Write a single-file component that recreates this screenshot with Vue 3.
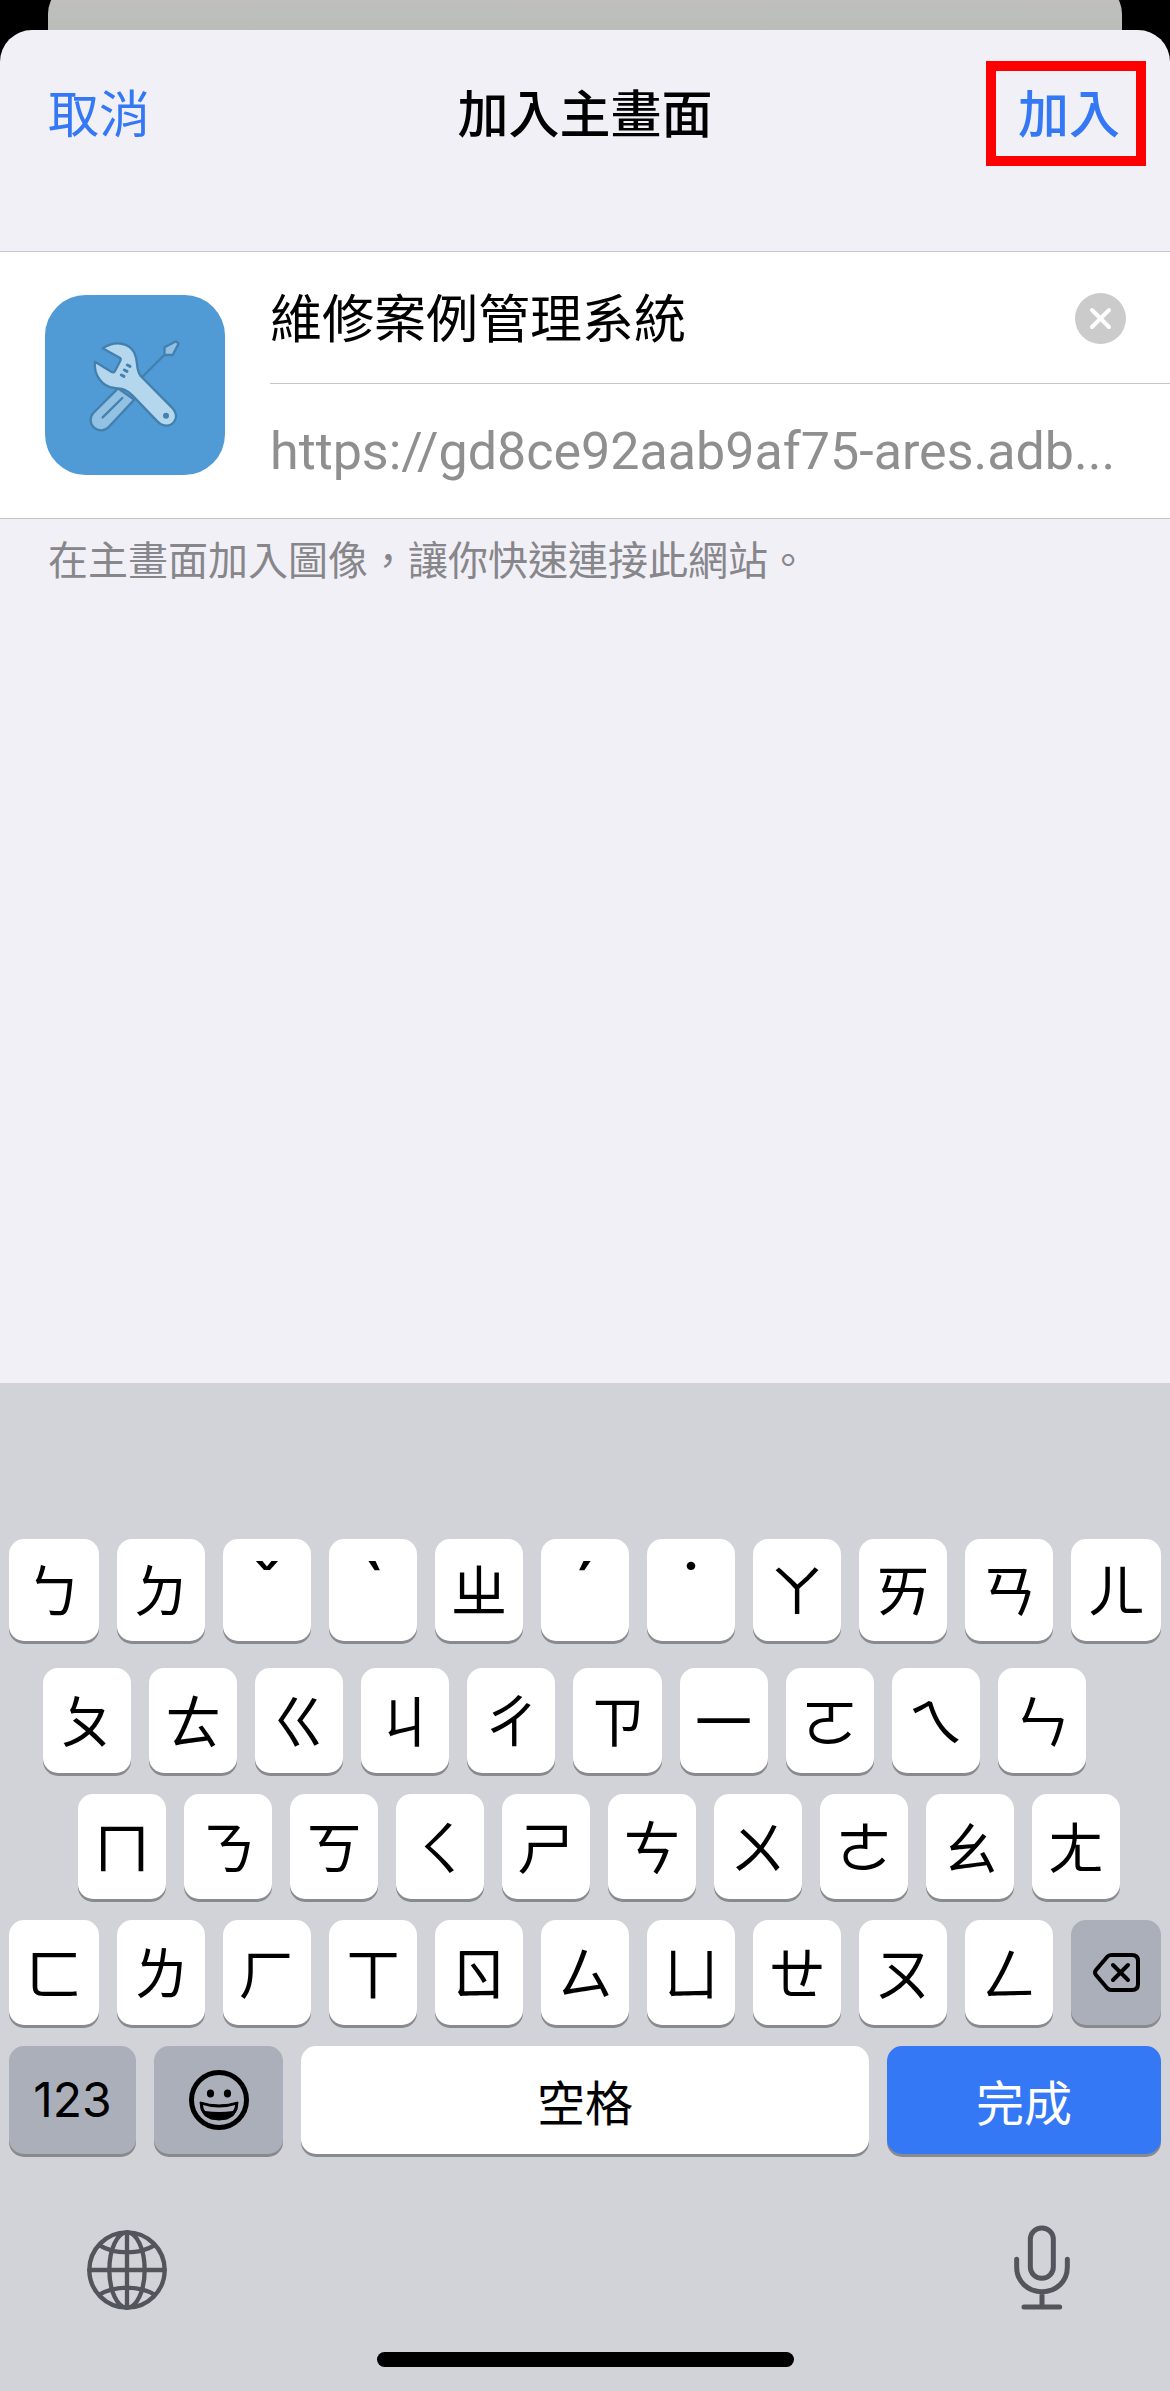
<script setup>
import { ref } from 'vue'

const name = ref('維修案例管理系統')
const url = 'https://gd8ce92aab9af75-ares.adb...'

const tones = ['ˇ', 'ˋ', 'ˊ', '˙']

const rows = [
  { id: 'first', keys: ['ㄅ', 'ㄉ', 'ˇ', 'ˋ', 'ㄓ', 'ˊ', '˙', 'ㄚ', 'ㄞ', 'ㄢ', 'ㄦ'] },
  { id: 'second', keys: ['ㄆ', 'ㄊ', 'ㄍ', 'ㄐ', 'ㄔ', 'ㄗ', '一', 'ㄛ', 'ㄟ', 'ㄣ'] },
  { id: 'third', keys: ['ㄇ', 'ㄋ', 'ㄎ', 'ㄑ', 'ㄕ', 'ㄘ', 'ㄨ', 'ㄜ', 'ㄠ', 'ㄤ'] },
  { id: 'fourth', keys: ['ㄈ', 'ㄌ', 'ㄏ', 'ㄒ', 'ㄖ', 'ㄙ', 'ㄩ', 'ㄝ', 'ㄡ', 'ㄥ'] },
]
</script>

<template>
  <div class="screen">
    <div class="behind"></div>

    <main class="sheet">
      <header class="bar">
        <div class="side">
          <button type="button" class="action">取消</button>
        </div>
        <h1 class="title">加入主畫面</h1>
        <div class="side end">
          <button type="button" class="action add">加入</button>
        </div>
      </header>

      <section class="card">
        <svg class="app-icon" viewBox="-75 -75 540 540" aria-hidden="true">
          <rect x="-75" y="-75" width="540" height="540" rx="122" fill="#509bd5" />
          <g stroke="#4380ae" stroke-width="7" stroke-linejoin="round" stroke-linecap="round">
            <path d="M218 170 284 104" fill="none" />
            <path d="M284 82 318 64 326 71 308 105H283Z" fill="#93c1e3" />
            <path d="M144 205 70 279A31 31 0 0 0 116 321L193 239Z" fill="#93c1e3" />
            <path d="M157 234 98 292" fill="none" />
            <path d="M98 85C137 60 178 69 193 98C207 127 195 145 212 168L309 266C330 292 310 318 287 317C276 316 268 311 262 304L187 226C165 204 154 207 133 204C96 200 70 164 75 125L125 156Q131 159 135 153L151 122Q154 116 149 113Z" fill="#b5d7ee" />
            <path d="M172 135 180 139M163 150 171 154M154 165 162 169" stroke-width="9" />
          </g>
          <circle cx="288" cy="287" r="9" fill="#4380ae" />
        </svg>

        <div class="fields">
          <div class="field named">
            <input v-model="name" class="name" type="text" aria-label="名稱" />
            <button type="button" class="clear" aria-label="清除" @click="name = ''">
              <svg viewBox="0 0 51 51" aria-hidden="true">
                <circle cx="25.500" cy="25.500" r="25.500" fill="#cbcbcb" />
                <path d="M17 17 34 34M34 17 17 34" stroke="#fff" stroke-width="4" stroke-linecap="round" />
              </svg>
            </button>
          </div>
          <div class="field">
            <span class="url">{{ url }}</span>
          </div>
        </div>
      </section>

      <p class="note">在主畫面加入圖像，讓你快速連接此網站。</p>
    </main>

    <section class="keyboard">
      <div class="rows">
        <div v-for="row in rows" :key="row.id" class="row" :class="row.id">
          <button
            v-for="k in row.keys"
            :key="k"
            type="button"
            class="key"
            :class="{ tone: tones.includes(k) }"
          >{{ k }}</button>
          <button v-if="row.id === 'fourth'" type="button" class="key gray" aria-label="刪除">
            <svg class="backspace" viewBox="0 0 47 39" aria-hidden="true">
              <path d="M18 2H39Q45 2 45 8V31Q45 37 39 37H18Q16 37 14 35L3 22Q1 19.500 3 17L14 4Q16 2 18 2Z" />
              <path d="M20 12 35 27M35 12 20 27" />
            </svg>
          </button>
        </div>

        <div class="row bottom">
          <button type="button" class="key gray digits">123</button>
          <button type="button" class="key gray emoji" aria-label="表情符號">
            <svg viewBox="0 0 60 60" aria-hidden="true">
              <circle cx="30" cy="30" r="27.500" fill="none" stroke="#000" stroke-width="5" />
              <ellipse cx="21.500" cy="23.500" rx="3.600" ry="4" />
              <ellipse cx="38.500" cy="23.500" rx="3.600" ry="4" />
              <path d="M11 32Q30 38 49 32Q49 50 30 50Q11 50 11 32Z" stroke="#000" stroke-linejoin="round" />
              <path d="M14 35Q30 40 46 35Q46 38 44 41Q30 43 16 41Q14 38 14 35Z" fill="#abafba" />
            </svg>
          </button>
          <button type="button" class="key space">空格</button>
          <button type="button" class="key done">完成</button>
        </div>
      </div>

      <div class="tools">
        <button type="button" class="tool" aria-label="切換鍵盤">
          <svg class="globe" viewBox="0 0 240 240" aria-hidden="true">
            <circle cx="120" cy="120" r="113" />
            <ellipse cx="120" cy="120" rx="53" ry="113" />
            <path d="M120 7V233M7 120H233M38 46Q72 67 120 67T202 46M38 194Q72 173 120 173T202 194" />
          </svg>
        </button>
        <button type="button" class="tool" aria-label="聽寫">
          <svg class="mic" viewBox="0 0 168 255" aria-hidden="true">
            <rect x="49" y="9" width="69" height="151" rx="34" />
            <path d="M8 103V126C8 170 42 200 84 200S160 170 160 126V103M84 200V246M30 246H137" />
          </svg>
        </button>
      </div>
      <div class="home"></div>
    </section>
  </div>
</template>

<style>
body {
  margin: 0;
  background: #000;
}
</style>

<style scoped>
.screen {
  display: flex;
  flex-direction: column;
  min-height: 100vh;
  background: #000;
  color: #000;
  font-family: Inter, "Noto Sans CJK TC", sans-serif;
}

button,
input {
  margin: 0;
  padding: 0;
  border: 0;
  background: none;
  color: inherit;
  font: inherit;
}

svg {
  display: block;
}

.behind {
  height: 64px;
  margin: 0 48px -34px;
  background: linear-gradient(#bfbfbd, #b9beb9 30px);
  clip-path: inset(-18px 0 0 0 round 32px);
}

.sheet {
  position: relative;
  flex: 1;
  border-radius: 32px 32px 0 0;
  background: #f1f0f6;
}

.bar {
  display: flex;
  align-items: flex-start;
  height: 190px;
  padding: 31px 24px 0;
}

.side {
  display: flex;
  flex: 1;
}

.end {
  justify-content: flex-end;
}

.action {
  height: 108px;
  padding: 0 24px;
  color: #3478f6;
  font-size: 51px;
  line-height: 108px;
}

.add {
  width: 160px;
  height: 105px;
  padding: 0 0 0 6px;
  border: 10px solid #f00;
  font-weight: 500;
  line-height: 88px;
}

.title {
  margin: 0;
  font-size: 51px;
  font-weight: 500;
  line-height: 108px;
}

.card {
  display: flex;
  align-items: center;
  gap: 45px;
  padding-left: 45px;
  border-top: 1px solid #c6c6c8;
  border-bottom: 1px solid #c6c6c8;
  background: #fff;
}

.app-icon {
  flex: none;
  width: 180px;
  height: 180px;
}

.fields {
  flex: 1;
  min-width: 0;
}

.field {
  display: flex;
  align-items: center;
  height: 134px;
  padding-right: 44px;
}

.named {
  height: 129px;
  padding-top: 2px;
  border-bottom: 1px solid #c6c6c8;
}

.name {
  flex: 1;
  min-width: 0;
  height: 80px;
  padding-bottom: 6px;
  font-size: 52px;
  outline: none;
}

.clear svg {
  width: 51px;
  height: 51px;
}

.url {
  overflow: hidden;
  color: #8f8f8f;
  font-family: Roboto, sans-serif;
  font-size: 52px;
  white-space: nowrap;
}

.note {
  margin: 0;
  padding: 12px 48px;
  color: #86868b;
  font-size: 40px;
  line-height: 60px;
}

.keyboard {
  padding-bottom: 24px;
  background: #d2d3d8;
}

.rows {
  display: flex;
  flex-direction: column;
  gap: 21px;
  padding: 156px 9px 0;
}

.row {
  display: flex;
  gap: 18px;
}

.first {
  margin-bottom: 6px;
}

.second {
  padding: 0 75px 0 34px;
}

.third {
  padding: 0 41px 0 69px;
}

.key {
  display: flex;
  flex: 88 1 0;
  box-sizing: border-box;
  align-items: center;
  justify-content: center;
  min-width: 0;
  height: 105px;
  padding-bottom: 6px;
  border-radius: 15px;
  background: #fff;
  box-shadow: 0 3px 0 #898a8d;
  font-family: "Noto Sans CJK TC", sans-serif;
  font-size: 57px;
  line-height: 80px;
}

.first .key {
  height: 102px;
}

.first .key:first-child,
.first .key:last-child,
.fourth .key:first-child,
.fourth .key:last-child {
  flex-grow: 90;
}

.first .tone {
  font-family: Inter, sans-serif;
  font-size: 64px;
  font-weight: 500;
}

.bottom .key {
  height: 108px;
  padding-bottom: 0;
  font-size: 48px;
}

.gray {
  padding-bottom: 0;
  background: #abafba;
}

.bottom .digits {
  flex: 127 1 0;
  font-family: Inter, sans-serif;
}

.bottom .emoji {
  flex: 129 1 0;
}

.emoji svg {
  width: 60px;
  height: 60px;
}

.bottom .space {
  flex: 568 1 0;
}

.bottom .done {
  flex: 274 1 0;
  background: #3478f6;
  color: #fff;
}

.backspace {
  width: 47px;
  height: 39px;
  fill: none;
  stroke: #000;
  stroke-width: 4;
  stroke-linecap: round;
}

.tools {
  display: flex;
  align-items: flex-end;
  justify-content: space-between;
  height: 86px;
  padding: 70px 100px 0 87px;
}

.tool svg {
  fill: none;
  stroke: #52565c;
  stroke-linecap: round;
}

.globe {
  width: 80px;
  height: 80px;
  stroke-width: 13;
}

.mic {
  width: 56px;
  height: 85px;
  stroke-width: 15;
}

.home {
  width: 417px;
  height: 15px;
  margin: 42px auto 0;
  border-radius: 8px;
  background: #000;
}
</style>
